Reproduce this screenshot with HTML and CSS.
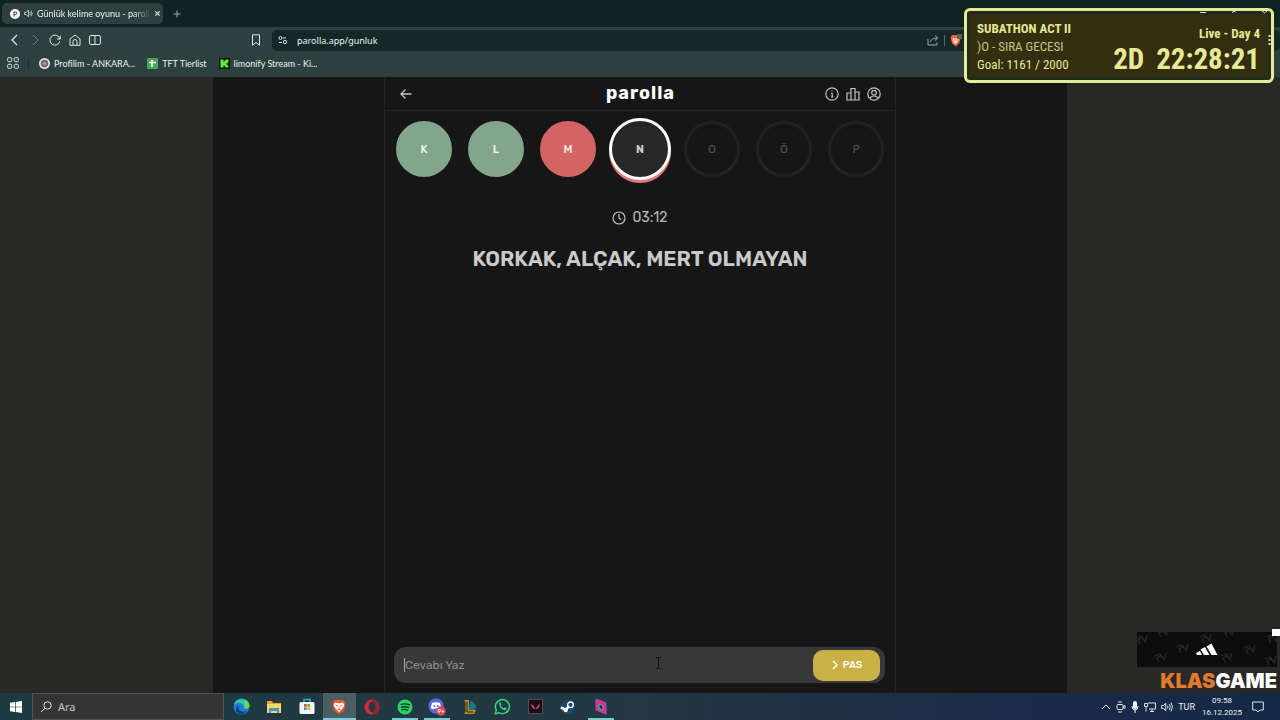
FILE: index.html
```html
<!doctype html>
<html lang="tr">
  <head>
    <title>Günlük kelime oyunu - parolla</title>
    <meta charset="utf-8">
    <meta name="viewport" content="width=device-width, initial-scale=1">
    <link rel="stylesheet" href="styles.css">
  </head>
  <body>
    <header class="browser">
      <div class="tabs">
        <div class="tab">
          <svg width="10" height="10" viewBox="0 0 10 10"><circle cx="5" cy="5" r="5" fill="#fff"/><path d="M4 7.500V3h1.500a1.300 1.300 0 0 1 0 2.600H4" fill="none" stroke="#333"/></svg>
          <svg class="line" width="9" height="9" viewBox="0 0 16 16" stroke-width="1.500"><path d="M1 6h3l4-4v12l-4-4H1zM10.500 5.500q2 2.500 0 5M12.500 3q4 5 0 10"/></svg>
          <span class="tab-title">Günlük kelime oyunu - paroll</span>
          <button class="icon" aria-label="Sekmeyi kapat"><svg class="line" width="7" height="7" viewBox="0 0 8 8" stroke-width="1.400"><path d="M1.500 1.500l5 5M6.500 1.500l-5 5"/></svg></button>
        </div>
        <button class="icon" aria-label="Yeni sekme"><svg class="line dim" width="8" height="8" viewBox="0 0 8 8"><path d="M4 .5v7M.5 4h7"/></svg></button>
      </div>
      <div class="toolbar">
        <nav class="nav">
          <button class="icon" aria-label="Geri"><svg class="line" width="12" height="12" viewBox="0 0 12 12" stroke-width="1.300"><path d="M8 1L3 6l5 5"/></svg></button>
          <button class="icon" aria-label="İleri"><svg class="line faint" width="12" height="12" viewBox="0 0 12 12"><path d="M4 1l5 5-5 5"/></svg></button>
          <button class="icon" aria-label="Yenile"><svg class="line" width="12" height="12" viewBox="0 0 12 12"><path d="M10.800 7.200A5 5 0 1 1 10 3.200L11 5M11.300 1.500V5H8"/></svg></button>
          <button class="icon" aria-label="Ana sayfa"><svg class="line" width="12" height="12" viewBox="0 0 12 12"><path d="M1 5l5-4 5 4v6.300H1zM4 11V7.500a2 2 0 0 1 4 0V11"/></svg></button>
          <button class="icon" aria-label="Kenar çubuğu"><svg class="line" width="12" height="12" viewBox="0 0 12 12"><rect x=".5" y="1.500" width="11" height="9" rx="1.500"/><path d="M6 1.500v9"/></svg></button>
        </nav>
        <button class="icon" aria-label="Yer imi"><svg class="line" width="10" height="12" viewBox="0 0 10 12"><path d="M1.500.8h7v10.400L5 8.500l-3.500 2.700z"/></svg></button>
        <div class="address">
          <svg class="line" width="10" height="10" viewBox="0 0 10 10"><circle cx="2.500" cy="3" r="1.500"/><path d="M5 3h3M1 7.500h3"/><circle cx="7" cy="7" r="1.700"/></svg>
          <input type="text" value="parolla.app/gunluk" aria-label="Adres">
          <button class="icon" aria-label="Paylaş"><svg class="line dim" width="12" height="12" viewBox="0 0 12 12"><path d="M1 5v6h9V8.500M3.500 8q.5-4 7-4M8 1.500L10.800 4 8 6.500"/></svg></button>
          <span class="divider"></span>
          <button class="icon" aria-label="Brave Shields"><svg width="12" height="13" viewBox="0 0 12 13"><path d="M2 1h7l1.500 2.500L9.500 9 6 12.500 2 9.500.5 3.500z" fill="#f0603c"/><path d="M3 4l2.500.5L8 4l.5 2-1.500 3-1.500 1L4 9 2.500 6z" fill="#ffd8cc"/><path d="M4 6h1M6.500 6h1" stroke="#f0603c"/><rect x="7" width="5" height="5" rx="1" fill="#566"/></svg></button>
        </div>
      </div>
      <nav class="bookmarks">
        <button class="icon" aria-label="Uygulamalar"><svg class="line" width="12" height="12" viewBox="0 0 12 12"><rect x=".7" y=".7" width="4" height="4" rx="1"/><rect x="7.300" y=".7" width="4" height="4" rx="1"/><rect x=".7" y="7.300" width="4" height="4" rx="1"/><rect x="7.300" y="7.300" width="4" height="4" rx="1"/></svg></button>
        <span class="divider"></span>
        <a href="#"><svg width="11" height="11" viewBox="0 0 11 11"><circle cx="5.500" cy="5.500" r="5.500" fill="#e5dfe0"/><circle cx="5.500" cy="5.500" r="3.700" fill="#756669"/><circle cx="5.500" cy="5.500" r="1.800" fill="#a89a9b"/></svg>Profilim - ANKARA...</a>
        <a href="#"><svg width="11" height="11" viewBox="0 0 11 11"><rect width="11" height="11" rx="1" fill="#43a758"/><path d="M5 2v7M2 4.500h7" stroke="#fff" stroke-width="1.500"/></svg>TFT Tierlist</a>
        <a href="#"><svg width="11" height="11" viewBox="0 0 11 11"><rect width="11" height="11" fill="#0a140a"/><path d="M1.500 1.500h3v2h1v-1h1v-1h3v3h-1v1h-1v1h1v1h1v2h-3v-1h-1v-1h-1v2h-3z" fill="#60ee38"/></svg>limonify Stream - Ki...</a>
      </nav>
    </header>

    <main class="page">
      <div class="stage">
        <section class="game">
          <header class="game-header">
            <button class="icon" aria-label="Geri dön"><svg class="line soft" width="12" height="12" viewBox="0 0 12 12" stroke-width="1.300"><path d="M11.500 6H1M5.500 1.500L1 6l4.500 4.500"/></svg></button>
            <h1>parolla</h1>
            <div class="game-actions">
              <button class="icon" aria-label="Bilgi"><svg class="line soft" width="14" height="14" viewBox="0 0 14 14" stroke-width="1.200"><circle cx="7" cy="7" r="6.200"/><path d="M6 6.500h1.200V10M6 10h2.500M7 3.800v1"/></svg></button>
              <button class="icon" aria-label="İstatistik"><svg class="line soft" width="14" height="14" viewBox="0 0 14 14" stroke-width="1.200"><path d="M5 6H1v7h4M5 1.500h4V13H5zM9 5h4v8H9"/></svg></button>
              <button class="icon" aria-label="Profil"><svg class="line soft" width="14" height="14" viewBox="0 0 14 14" stroke-width="1.200"><circle cx="7" cy="7" r="6.200"/><circle cx="7" cy="5.700" r="2.300"/><path d="M3 11.500q1-2.500 4-2.500t4 2.500"/></svg></button>
            </div>
          </header>
          <ol class="letters">
            <li class="correct">K</li>
            <li class="correct">L</li>
            <li class="wrong">M</li>
            <li class="current">N</li>
            <li>O</li>
            <li>Ö</li>
            <li>P</li>
          </ol>
          <p class="timer"><svg class="line soft" width="14" height="14" viewBox="0 0 14 14" stroke-width="1.200"><circle cx="7" cy="7" r="6"/><path d="M7 3v4l2 2"/></svg>03:12</p>
          <h2>KORKAK, ALÇAK, MERT OLMAYAN</h2>
          <form class="answer">
            <input type="text" placeholder="Cevabı Yaz" aria-label="Cevap">
            <button type="button"><svg width="8" height="10" viewBox="0 0 8 10"><path d="M2 1l4 4-4 4" fill="none" stroke="#fff" stroke-width="1.500"/></svg>PAS</button>
          </form>
        </section>
      </div>
    </main>

    <footer class="taskbar">
      <button class="start" aria-label="Başlat"><svg width="12" height="12" viewBox="0 0 12 12"><path d="M0 1.700l5-.7v4.700H0zM5.700.9L12 0v5.700H5.700zM0 6.300h5V11l-5-.7zM5.700 6.300H12V12l-6.300-.9z" fill="#fff"/></svg></button>
      <label class="search">
        <svg class="line" width="12" height="12" viewBox="0 0 12 12"><circle cx="7.500" cy="4.500" r="3.700"/><path d="M5 7.200L1 11"/></svg>
        <input type="text" placeholder="Ara" aria-label="Ara">
      </label>
      <div class="apps">
        <button aria-label="Edge"><svg width="17" height="17" viewBox="0 0 17 17"><circle cx="8.500" cy="8.500" r="8" fill="#1b7fd0"/><path d="M1 7C3-1 15-1 16.500 7c.5 4-5 4.500-6 3 2-4-5-7-9.500-3z" fill="#38c8a0"/><path d="M12 2q4 2 4.500 6-1 3-5 2.500z" fill="#72d858"/><path d="M6 8c-2 4 2 7 8 5-4 5-11 3-11-1 0-2 1-4 3-4z" fill="#103e88"/></svg></button>
        <button aria-label="Dosya Gezgini"><svg width="16" height="14" viewBox="0 0 16 14"><path d="M1 1h5l1 2h8v10H1z" fill="#e8a62c"/><path d="M1 4h14v9H1z" fill="#fbd768"/><path d="M3 8h10v5h-2v-2H5v2H3z" fill="#4696cc"/></svg></button>
        <button aria-label="Microsoft Store"><svg width="16" height="17" viewBox="0 0 16 17"><path d="M5 4V1.500h6V4" fill="none" stroke="#38a7d8" stroke-width="1.500"/><rect x=".5" y="4" width="15" height="12" rx="1.500" fill="#f5f5f5"/><path d="M5 6h2.700v2.700H5z" fill="#e34b30"/><path d="M8.300 6H11v2.700H8.300z" fill="#6faf29"/><path d="M5 9.300h2.700V12H5z" fill="#259ddb"/><path d="M8.300 9.300H11V12H8.300z" fill="#f3b61e"/></svg></button>
        <button class="active" aria-label="Brave"><svg width="14" height="16" viewBox="0 0 14 16"><path d="M3 1h8l2.500 2.500L12.500 11 7 15.500 1.500 11 .5 3.500z" fill="#f4552a"/><path d="M3 3.500l4 .8 4-.8 1.300 3L10 10l-3 3-3-3-2.300-3.500z" fill="#fff"/><path d="M3.700 6.300l2 .8M10.300 6.300l-2 .8M7 7.500v2M5.500 10.500h3" stroke="#f4552a"/></svg></button>
        <button aria-label="Opera"><svg width="16" height="16" viewBox="0 0 16 16"><circle cx="8" cy="8" r="7.500" fill="#dc2638"/><path d="M8 1c6 0 7 3 7 7s-1 7-7 7z" fill="#a31f2e"/><ellipse cx="8" cy="8" rx="3.300" ry="5.300" fill="#203942"/></svg></button>
        <button class="running" aria-label="Spotify"><svg width="16" height="16" viewBox="0 0 16 16"><circle cx="8" cy="8" r="7.500" fill="#25d366"/><path d="M3.500 5.500q5-1.500 9.500.7M4 8.200q4.500-1.200 8 .7M4.500 10.700q3.500-.8 6.500.7" fill="none" stroke="#12351f" stroke-width="1.300"/></svg></button>
        <button class="running" aria-label="Discord"><svg width="18" height="18" viewBox="0 0 18 18"><circle cx="8" cy="8" r="7.700" fill="#5566dc"/><path d="M4 5q4-1.500 8 0l1.300 5-2.300 1.500-1-1H6l-1 1L2.700 10z" fill="#fff"/><circle cx="6.300" cy="8" r="1" fill="#5566dc"/><circle cx="9.700" cy="8" r="1" fill="#5566dc"/><circle cx="13" cy="13" r="4.700" fill="#d94a56"/><text x="13" y="15" text-anchor="middle" class="count">9+</text></svg></button>
        <button aria-label="League of Legends"><svg width="16" height="16" viewBox="0 0 16 16"><path d="M8 2a6 6 0 0 1 5 9H7z" fill="#187789"/><path d="M2 1h5v10h7l-2 4H2l1.500-2V3z" fill="#b98c31"/><path d="M5 3v10h6" fill="none" stroke="#2a2312"/></svg></button>
        <button aria-label="WhatsApp"><svg width="17" height="17" viewBox="0 0 17 17"><path d="M1.300 15.700l1-3.700a7 7 0 1 1 2.700 2.700z" fill="#203942" stroke="#35d67c" stroke-width="1.500"/><path d="M5 5q1-1.300 1.700 0l.7 1.500-.7 1q1 2 3 2.700l1-1 2 1q0 2-2.200 2Q5.500 11 5 5z" fill="#35d67c"/></svg></button>
        <button aria-label="Valorant"><svg width="15" height="15" viewBox="0 0 15 15"><rect x=".5" y=".5" width="14" height="14" fill="#161019" stroke="#6a414d"/><path d="M3.500 4.500l4 5.500H5.700L3.500 7.300zM11.500 4.500V7.300L9.300 10H7.800z" fill="#f04e62"/></svg></button>
        <button aria-label="Steam"><svg width="16" height="16" viewBox="0 0 16 16"><circle cx="8" cy="8" r="7.500" fill="#17466f"/><path d="M.8 8.500L6 10.700l4-5" stroke="#fff" stroke-width="2.500" fill="none"/><circle cx="10.500" cy="5.800" r="2.800" fill="#17466f" stroke="#fff" stroke-width="1.400"/><circle cx="5.700" cy="11" r="2.200" fill="#fff"/></svg></button>
        <button class="running" aria-label="Medal"><svg width="14" height="17" viewBox="0 0 14 17"><path d="M2 1l10 4v11L2 12z" fill="#e72e6a" stroke="#a24ce0"/><path d="M5 6l4 1.500V12L5 10.500z" fill="#203942" stroke="#39b6df"/></svg></button>
      </div>
      <div class="tray">
        <svg class="line" width="10" height="10" viewBox="0 0 10 10"><path d="M1 7l4-4 4 4"/></svg>
        <svg class="line" width="10" height="12" viewBox="0 0 10 12"><rect x="1" y="3.500" width="6" height="5" rx="1"/><path d="M7 5.500l2-1v3l-2-1M2 1h4M2 11h4"/></svg>
        <svg width="8" height="12" viewBox="0 0 8 12"><rect x="2" width="4" height="8" rx="2" fill="#fff"/><path d="M1 5q0 4 3 4t3-4M4 9v3" fill="none" stroke="#fff"/></svg>
        <svg class="line" width="12" height="12" viewBox="0 0 12 12"><path d="M4 2h7.500v6H5M8 8v2.500M6 10.500h4M.5 2.500h3v3h-3zM2 5.500v5"/></svg>
        <svg class="line" width="12" height="12" viewBox="0 0 12 12"><path d="M.7 4.500h2l2-2.500v8l-2-2.500h-2zM6.500 4.500q1 1.500 0 3M8.300 3q2 3 0 6M10 1.500q3 4.500 0 9"/></svg>
        <span>TUR</span>
        <time datetime="2025-12-16T09:58">09:58<br>16.12.2025</time>
        <svg class="line" width="12" height="12" viewBox="0 0 12 12"><path d="M.7 1h10.600v8H8l-2 2-2-2H.7z"/></svg>
      </div>
    </footer>

    <aside class="subathon">
      <div class="subathon-panel">
        <div class="goal">
          <strong>SUBATHON ACT II</strong>
          <div class="song">)O - SIRA GECESI</div>
          <div>Goal: 1161 / 2000</div>
        </div>
        <div class="live">
          <div class="day">Live - Day 4</div>
          <div class="countdown"><span>2D</span><span>22:28:21</span></div>
        </div>
      </div>
    </aside>
    <svg class="window-buttons line" width="80" height="38" viewBox="0 0 80 38"><path d="M0 5.500h6M35 5.500V2.500h2.500M32 5.500l3-2M61 3l3.500 3L68 3"/><path d="M69.500 28v2M69.500 32v2M69.500 36v2" stroke-width="2"/></svg>
    <svg class="cursor" width="7" height="12" viewBox="0 0 7 12"><path d="M1 .5h2l.5.5.5-.5h2M3.500 1v10M1 11.500h2l.5-.5.5.5h2" fill="none" stroke="#111"/></svg>

    <aside class="sponsor">
      <span class="corner"></span>
      <svg width="140" height="35" viewBox="0 0 140 35">
        <rect width="140" height="35" fill="#0d0d0d"/>
        <g fill="none" stroke="#292929" stroke-width="1.300">
          <path id="mark" d="M18 24l5-2 1 2-4 2 2 4M24 23l3 5 2-7"/>
          <use href="#mark" x="22" y="-9"/><use href="#mark" x="66" y="0"/><use href="#mark" x="45" y="-19"/><use href="#mark" x="89" y="-8"/><use href="#mark" x="-19" y="-18"/><use href="#mark" x="110" y="3"/><use href="#mark" x="2" y="-25"/><use href="#mark" x="68" y="-25"/><use href="#mark" x="112" y="-19"/>
        </g>
        <path d="M59 21l4-2 2 4h-5zM63.500 17.500l4.500-2.500 4.500 8H67zM69.500 14.500l5-3 6 11.500h-6z" fill="#fff"/>
      </svg>
      <div class="sponsor-name"><b>KLAS</b>GAME</div>
    </aside>
  </body>
</html>
```
FILE: styles.css
```css
* {
  box-sizing: border-box;
}
body {
  margin: 0;
  height: 100vh;
  display: flex;
  flex-direction: column;
  overflow: hidden;
  position: relative;
  font-family: Lato, sans-serif;
  font-size: 9px;
  color: #eef3f2;
  background: #282827;
}
button, input {
  font: inherit;
  color: inherit;
  background: none;
  border: 0;
  padding: 0;
  margin: 0;
  min-width: 0;
  outline: 0;
}
svg {
  display: block;
  flex-shrink: 0;
}
.line {
  fill: none;
  stroke: #dce5e3;
}
.dim {
  stroke: #9aaba8;
}
.faint {
  stroke: #6d7f7c;
}
.soft {
  stroke: #c2c2c2;
}

/* browser */
.browser {
  background: #2d403f;
  height: 77px;
  flex-shrink: 0;
}
.tabs {
  display: flex;
  align-items: center;
  gap: 10px;
  height: 27px;
  padding: 0 2px;
  background: #0e2322;
}
.tab {
  display: flex;
  align-items: center;
  gap: 4px;
  width: 161px;
  height: 21px;
  padding: 0 7px 0 8px;
  border-radius: 5px;
  background: #2d403f;
}
.tab-title {
  flex: 1;
  white-space: nowrap;
  mask-image: linear-gradient(to right, #000 85%, transparent);
}
.toolbar {
  display: flex;
  align-items: center;
  height: 26px;
  padding-left: 9px;
}
.nav {
  display: flex;
  gap: 8px;
  width: 242px;
}
.address {
  flex: 1;
  display: flex;
  align-items: center;
  gap: 5px;
  height: 21px;
  margin-left: 11px;
  padding: 0 318px 0 6px;
  border-radius: 5px;
  background: #132827;
}
.address input {
  flex: 1;
  margin-left: 4px;
  font-family: "Noto Sans", sans-serif;
}
.divider {
  width: 1px;
  height: 11px;
  background: #536764;
}
.bookmarks {
  display: flex;
  align-items: center;
  height: 20px;
  padding-left: 7px;
}
.bookmarks .divider {
  margin: 0 10px 0 9px;
  background: #1c2e2c;
}
.bookmarks a {
  display: flex;
  align-items: center;
  gap: 4px;
  margin-right: 12px;
  color: inherit;
  text-decoration: none;
}

/* game */
.page {
  flex: 1;
  display: flex;
  justify-content: center;
  min-height: 0;
}
.stage {
  width: 66.66%;
  display: flex;
  justify-content: center;
  background: #161616;
}
.game {
  width: 60%;
  display: flex;
  flex-direction: column;
  border: 1px solid #222;
  border-width: 0 1px;
  font-family: Rubik, Inter, sans-serif;
}
.game-header {
  display: grid;
  grid-template-columns: 1fr auto 1fr;
  align-items: center;
  height: 34px;
  padding: 0 14px 0 15px;
  border-bottom: 1px solid #242424;
}
h1 {
  margin: 0 0 2px;
  font-size: 18px;
  line-height: 20px;
  letter-spacing: 1px;
  color: #fff;
}
.game-actions {
  display: flex;
  justify-content: flex-end;
  gap: 7px;
}
.letters {
  display: flex;
  justify-content: center;
  gap: 16px;
  margin: 10px 0 0;
  padding: 0;
  list-style: none;
}
.letters li {
  display: flex;
  align-items: center;
  justify-content: center;
  width: 56px;
  height: 56px;
  border: 3px solid #222;
  border-radius: 50%;
  font-size: 11px;
  font-weight: 400;
  color: #555;
}
.letters .correct {
  border-color: #83a58b;
  background: #83a58b;
  color: #f0f5f0;
  font-weight: 500;
}
.letters .wrong {
  border-color: #d46464;
  background: #d46464;
  color: #fbeaea;
  font-weight: 500;
}
.letters .current {
  border-color: #282828;
  background: #282828;
  color: #ccc;
  font-weight: 700;
  box-shadow: 0 0 0 3px #fff, 0 3px 0 3px #e07a74;
}
.timer {
  display: flex;
  align-items: center;
  justify-content: center;
  gap: 6px;
  margin: 32px 0 0;
  font-size: 14px;
  line-height: 18px;
  color: #b8b8b8;
}
h2 {
  margin: 20px 0 0;
  text-align: center;
  font-size: 21px;
  font-weight: 600;
  line-height: 24px;
  color: #cacaca;
}
.answer {
  display: flex;
  align-items: center;
  height: 36px;
  margin: auto 10px 10px 9px;
  padding: 0 5px 0 10px;
  border-radius: 12px;
  background: #383838;
}
.answer input {
  flex: 1;
  height: 14px;
  border-left: 1px solid #aaa;
  font-size: 12px;
}
.answer input::placeholder {
  color: #8c8c8c;
}
.answer button {
  display: flex;
  align-items: center;
  justify-content: center;
  gap: 4px;
  width: 67px;
  height: 31px;
  border-radius: 10px;
  background: #c9b146;
  color: #fff;
  font-size: 10px;
  font-weight: 500;
}

/* taskbar */
.taskbar {
  display: flex;
  flex-shrink: 0;
  height: 27px;
  background: linear-gradient(to right, #1c3a42, #233841 50%, #1b2c47 75%, #152847);
}
.start {
  width: 32px;
  display: grid;
  place-items: center;
}
.search {
  display: flex;
  align-items: center;
  gap: 6px;
  width: 192px;
  padding: 0 7px;
  border: 1px solid #505554;
  background: #343434;
  font-family: "Noto Sans", sans-serif;
  font-size: 11px;
}
.search input {
  flex: 1;
}
.search input::placeholder {
  color: #c5c5c5;
}
.apps {
  display: grid;
  grid-template-columns: repeat(12, 1fr);
  width: 392px;
  margin-left: 1px;
}
.apps button {
  display: grid;
  place-items: center;
}
.apps .active {
  background: #4b5e64;
  box-shadow: inset 0 -2px #79cbd9;
}
.apps .running {
  background: linear-gradient(#79cbd9, #79cbd9) bottom / 26px 2px no-repeat;
}
.count {
  font-size: 6px;
  font-weight: 700;
  fill: #fff;
}
.tray {
  display: flex;
  align-items: center;
  gap: 5px;
  margin-left: auto;
  padding-right: 16px;
  font-family: Roboto, sans-serif;
}
.tray time {
  width: 42px;
  margin: 0 4px 0 1px;
  text-align: center;
  font-size: 8px;
  line-height: 12px;
}

/* stream overlays */
.subathon {
  position: absolute;
  top: 8px;
  right: 6px;
  width: 310px;
  height: 75px;
  padding: 3px;
  border: 3px solid #e8e996;
  border-radius: 6px;
  background: #202d1c;
  font-family: "Roboto Condensed", Roboto, sans-serif;
  color: #e8e996;
}
.subathon-panel {
  display: flex;
  justify-content: space-between;
  height: 100%;
  padding: 6px 8px 0 7px;
  background: #332e10;
}
.goal {
  font-size: 13px;
  line-height: 18px;
  white-space: nowrap;
}
.song {
  color: #c5c580;
}
.live {
  text-align: right;
  font-weight: 700;
}
.day {
  padding-top: 5px;
  font-size: 13px;
  line-height: 18px;
}
.countdown {
  display: flex;
  justify-content: flex-end;
  gap: 12px;
  font-size: 29px;
  line-height: 32px;
}
.window-buttons {
  position: absolute;
  top: 7px;
  right: 0;
}
.cursor {
  position: absolute;
  left: 655px;
  top: 657px;
}
.sponsor {
  position: absolute;
  right: 3px;
  bottom: 25px;
  display: flex;
  flex-direction: column;
  align-items: flex-end;
}
.corner {
  position: absolute;
  top: -3px;
  right: -3px;
  width: 8px;
  height: 7px;
  background: #fff;
}
.sponsor-name {
  font-family: Inter, sans-serif;
  font-size: 20px;
  font-weight: 900;
  line-height: 28px;
  color: #fff;
}
.sponsor-name b {
  font-weight: 900;
  color: #e17a2c;
}
```
